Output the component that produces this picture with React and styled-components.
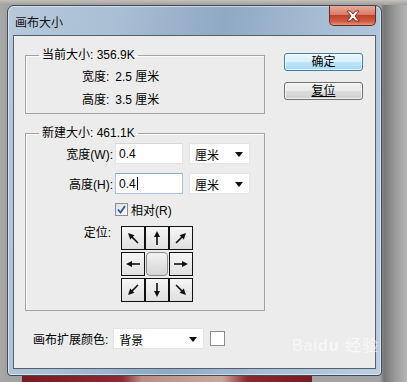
import React from 'react'
import styled, { createGlobalStyle } from 'styled-components'

const GlobalStyle = createGlobalStyle`
  html, body {
    margin: 0;
    padding: 0;
    background: #9f9f9f;
  }
  body {
    font-family: "Liberation Sans", "Noto Sans CJK SC", sans-serif;
    font-size: 12px;
    color: #000;
  }
`

const arrows = {
  nw: -135,
  n: -90,
  ne: -45,
  w: 180,
  e: 0,
  sw: 135,
  s: 90,
  se: 45,
}

const Arrow = ({ angle }) => (
  <svg width="18" height="18" viewBox="-9 -9 18 18">
    <g transform={`rotate(${angle})`}>
      <line x1="-7" y1="0" x2="3" y2="0" stroke="#111" strokeWidth="1.6" />
      <polygon points="7,0 1,-3 1,3" fill="#111" />
    </g>
  </svg>
)

const CloseIcon = () => (
  <svg width="14" height="12" viewBox="0 0 14 12">
    <path
      d="M1 1 H4.5 L7 4 L9.5 1 H13 L9 6 L13 11 H9.5 L7 8 L4.5 11 H1 L5 6 Z"
      fill="#fff"
      stroke="#5a1a10"
      strokeWidth="0.8"
      strokeLinejoin="round"
    />
  </svg>
)

const Caret = () => (
  <svg width="8" height="5" viewBox="0 0 8 5">
    <polygon points="0,0 8,0 4,5" fill="#111" />
  </svg>
)

const Check = () => (
  <svg width="11" height="11" viewBox="0 0 11 11">
    <path d="M2 5.5 L4.5 8.5 L9 2" fill="none" stroke="#2f55a8" strokeWidth="1.8" />
  </svg>
)

export default function App() {
  const grid = ['nw', 'n', 'ne', 'w', null, 'e', 'sw', 's', 'se']
  return (
    <>
      <GlobalStyle />
      <Backdrop>
        <Window>
          <TitleBar>
            <TitleText>画布大小</TitleText>
            <CloseButton>
              <CloseIcon />
            </CloseButton>
          </TitleBar>
          <Content>
            <LeftCol>
              <Group padBottom="5px">
                <Legend>当前大小: 356.9K</Legend>
                <InfoRow>
                  <span>宽度:</span>
                  <span>2.5 厘米</span>
                </InfoRow>
                <InfoRow>
                  <span>高度:</span>
                  <span>3.5 厘米</span>
                </InfoRow>
              </Group>
              <Group padBottom="8px" spaced>
                <Legend>新建大小: 461.1K</Legend>
                <FieldRow>
                  <FieldLabel>宽度(W):</FieldLabel>
                  <TextBox>0.4</TextBox>
                  <Select width="61px">
                    <span>厘米</span>
                    <Caret />
                  </Select>
                </FieldRow>
                <FieldRow gap="9px">
                  <FieldLabel>高度(H):</FieldLabel>
                  <TextBox focused>
                    0.4<Cursor />
                  </TextBox>
                  <Select width="61px">
                    <span>厘米</span>
                    <Caret />
                  </Select>
                </FieldRow>
                <CheckRow>
                  <CheckBox>
                    <Check />
                  </CheckBox>
                  <span>相对(R)</span>
                </CheckRow>
                <AnchorRow>
                  <AnchorLabel>定位:</AnchorLabel>
                  <AnchorGrid>
                    {grid.map((dir, i) =>
                      dir ? (
                        <AnchorCell key={i}>
                          <Arrow angle={arrows[dir]} />
                        </AnchorCell>
                      ) : (
                        <AnchorCenter key={i} />
                      ),
                    )}
                  </AnchorGrid>
                </AnchorRow>
              </Group>
              <BottomRow>
                <span>画布扩展颜色:</span>
                <Select width="91px">
                  <span>背景</span>
                  <Caret />
                </Select>
                <Swatch />
              </BottomRow>
            </LeftCol>
            <RightCol>
              <DialogButton primary>确定</DialogButton>
              <DialogButton>
                <u>复位</u>
              </DialogButton>
            </RightCol>
            <Watermark>
              Bai<b>du</b> 经验
            </Watermark>
          </Content>
        </Window>
        <PhotoStrip />
      </Backdrop>
    </>
  )
}

// #region styles
const Backdrop = styled.div`
  width: 407px;
  height: 382px;
  overflow: hidden;
  display: flex;
  flex-direction: column;
  padding: 5px 0 0 7px;
  box-sizing: border-box;
  background:
    linear-gradient(to bottom, #c4c0bc 0, #a19d9a 5px, transparent 5px),
    linear-gradient(
      to right,
      #a8a8a8 0,
      #a2a2a2 7px,
      #a2a2a2 380px,
      #767676 384px,
      #999 395px,
      #b6b6b6 407px
    );
`

const Window = styled.div`
  width: 375px;
  height: 371px;
  flex: none;
  box-sizing: border-box;
  border: 1px solid #3f4a58;
  border-radius: 7px 7px 4px 4px;
  background: linear-gradient(
    100deg,
    #b7c9db 0%,
    #a9bfd4 25%,
    #8fa9c3 50%,
    #a4bbd2 70%,
    #bccfe1 100%
  );
  box-shadow: inset 0 0 0 1px rgba(255, 255, 255, 0.5);
  display: flex;
  flex-direction: column;
  padding: 0 5px 6px;
`

const TitleBar = styled.div`
  height: 29px;
  display: flex;
  align-items: center;
  justify-content: space-between;
  padding-left: 2px;
`

const TitleText = styled.span`
  font-size: 12px;
  color: #111;
  margin-top: 1px;
`

const CloseButton = styled.div`
  width: 47px;
  height: 20px;
  margin-top: -9px;
  box-sizing: border-box;
  border: 1px solid #6d2a22;
  border-top: none;
  border-radius: 0 0 5px 5px;
  background: linear-gradient(
    to bottom,
    #e8a99b 0%,
    #d87c69 45%,
    #c3412b 50%,
    #cd5a40 80%,
    #e3937a 100%
  );
  display: flex;
  align-items: center;
  justify-content: center;
`

const Content = styled.div`
  position: relative;
  flex: 1;
  background: #ececec;
  border: 1px solid #56606c;
  display: flex;
  padding: 12px 0 0 11px;
`

const LeftCol = styled.div`
  width: 240px;
  display: flex;
  flex-direction: column;
`

const RightCol = styled.div`
  display: flex;
  flex-direction: column;
  gap: 11px;
  margin-left: 19px;
  padding-top: 5px;
`

const Group = styled.fieldset`
  margin: ${({ spaced }) => (spaced ? '12px 0 0' : '0')};
  padding: 0 0 ${({ padBottom }) => padBottom} 0;
  min-width: 0;
  border: 1px solid #a3a3a3;
  box-shadow: inset 1px 1px 0 #fafafa;
  display: flex;
  flex-direction: column;
`

const Legend = styled.legend`
  margin-left: 13px;
  padding: 0 3px;
  line-height: 14px;
  font-size: 12px;
`

const InfoRow = styled.div`
  display: flex;
  gap: 6px;
  margin: 7px 0 0 56px;
  line-height: 16px;
  & + & {
    margin-top: 7px;
  }
`

const FieldRow = styled.div`
  display: flex;
  align-items: center;
  margin-top: ${({ gap }) => gap || '3px'};
  height: 21px;
`

const FieldLabel = styled.span`
  width: 89px;
  text-align: right;
  padding-right: 2px;
  box-sizing: border-box;
`

const TextBox = styled.div`
  width: 68px;
  height: 21px;
  box-sizing: border-box;
  background: #fff;
  border: 1px solid ${({ focused }) => (focused ? '#a9c3dc' : '#e2e2e2')};
  border-top-color: ${({ focused }) => (focused ? '#8eaecb' : '#d6d6d6')};
  padding: 0 0 0 3px;
  display: flex;
  align-items: center;
  font-size: 12px;
`

const Cursor = styled.span`
  display: inline-block;
  width: 1px;
  height: 13px;
  background: #000;
  margin-left: 1px;
`

const Select = styled.div`
  width: ${({ width }) => width};
  height: 21px;
  box-sizing: border-box;
  background: #fff;
  border: 1px solid #e4e4e4;
  margin-left: 6px;
  display: flex;
  align-items: center;
  justify-content: space-between;
  padding: 1px 6px 0 5px;
`

const CheckRow = styled.div`
  display: flex;
  align-items: center;
  gap: 3px;
  margin: 8px 0 0 89px;
  height: 15px;
`

const CheckBox = styled.div`
  width: 13px;
  height: 13px;
  box-sizing: border-box;
  border: 1px solid #8e8f8f;
  background: linear-gradient(135deg, #dcdcdc, #fefefe);
  display: flex;
  align-items: center;
  justify-content: center;
`

const AnchorRow = styled.div`
  display: flex;
  margin-top: 9px;
`

const AnchorLabel = styled.span`
  width: 85px;
  text-align: right;
  line-height: 14px;
`

const AnchorGrid = styled.div`
  display: grid;
  grid-template-columns: repeat(3, 24px);
  grid-template-rows: repeat(3, 24px);
  row-gap: 2px;
  margin-left: 10px;
`

const AnchorCell = styled.div`
  box-sizing: border-box;
  border: 1px solid #111;
  background: linear-gradient(to bottom, #f6f6f6, #e0e0e0);
  display: flex;
  align-items: center;
  justify-content: center;
`

const AnchorCenter = styled.div`
  margin: 0 1px;
  box-sizing: border-box;
  border: 1px solid #8a8a8a;
  border-radius: 4px;
  background: linear-gradient(to bottom, #f2f2f2, #d6d6d6);
`

const BottomRow = styled.div`
  display: flex;
  align-items: center;
  margin: 17px 0 0 8px;
  & > span {
    margin-right: -1px;
  }
`

const Swatch = styled.div`
  width: 13px;
  height: 13px;
  margin-left: 6px;
  background: #fff;
  border: 1px solid #8c8c8c;
`

const DialogButton = styled.div`
  width: 79px;
  height: 18px;
  box-sizing: border-box;
  border: 1px solid ${({ primary }) => (primary ? '#3c7fb1' : '#707070')};
  border-radius: 3px;
  background: ${({ primary }) =>
    primary
      ? 'linear-gradient(to bottom, #eaf6fd 0%, #d9f0fc 50%, #bee6fd 51%, #a7d9f5 100%)'
      : 'linear-gradient(to bottom, #f2f2f2 0%, #ebebeb 50%, #dddddd 51%, #cfcfcf 100%)'};
  box-shadow: inset 0 0 0 1px rgba(255, 255, 255, 0.7);
  display: flex;
  align-items: center;
  justify-content: center;
  font-size: 12px;
  line-height: 14px;
`

const Watermark = styled.div`
  position: absolute;
  right: -4px;
  bottom: 12px;
  font-size: 16px;
  color: rgba(255, 255, 255, 0.6);
  letter-spacing: 1px;
  & b {
    font-weight: bold;
  }
`

const PhotoStrip = styled.div`
  flex: 1;
  margin: 0 0 0 15px;
  width: 290px;
  background: linear-gradient(
    to right,
    #7a1a22 0,
    #8e2a30 100px,
    #b98e84 120px,
    #c9a79a 200px,
    #8a2a2e 225px,
    #7a1a22 290px
  );
`
// #endregion
